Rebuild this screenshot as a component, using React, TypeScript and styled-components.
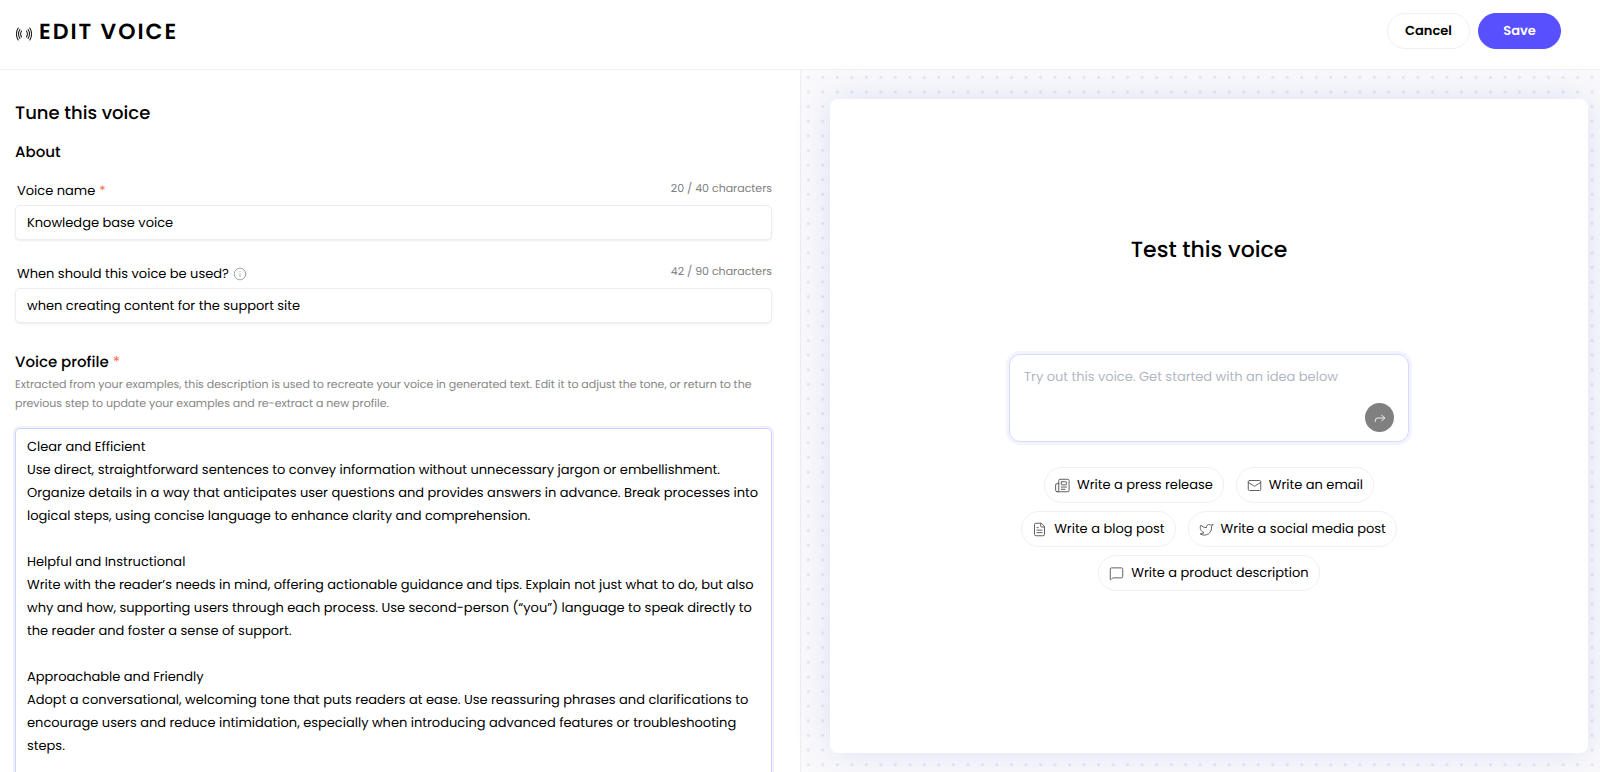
import React, { useState } from "react";
import styled, { createGlobalStyle, css } from "styled-components";
import { FileText, Forward, Info, Mail, MessageSquare, Twitter } from "lucide-react";

const GlobalStyle = createGlobalStyle`
  *, *::before, *::after { box-sizing: border-box; }
  body {
    margin: 0;
    background: #fff;
    color: #000;
    font-family: Poppins, Inter, "Open Sans", sans-serif;
    font-size: 14px;
    line-height: 20px;
    text-rendering: geometricPrecision;
  }
  button, input, textarea { font: inherit; color: inherit; text-rendering: inherit; }
  h1, h2, h3, p { margin: 0; }
`;

const Page = styled.div`
  display: flex;
  flex-direction: column;
  height: 100vh;
  overflow: hidden;
`;

const Header = styled.header`
  display: flex;
  flex: none;
  align-items: flex-start;
  justify-content: space-between;
  height: 70px;
  padding: 13px 39px 0 16px;
  border-bottom: 1px solid #f1f1f3;
`;

const Brand = styled.div`
  display: flex;
  align-items: center;
  gap: 7px;
  height: 38px;
`;

const PageTitle = styled.h1`
  font-size: 22px;
  line-height: 36px;
  font-weight: 600;
  letter-spacing: 2px;
  text-transform: uppercase;
`;

const Actions = styled.div`
  display: flex;
  gap: 8px;
`;

const ActionButton = styled.button<{ $primary?: boolean }>`
  width: 83px;
  height: 36px;
  padding: 0;
  border: 1px solid #f0f0f2;
  border-radius: 18px;
  background: #fff;
  font-size: 13px;
  font-weight: 600;
  ${(p) =>
    p.$primary &&
    css`
      border-color: #5850ff;
      background: #5850ff;
      color: #fff;
    `}
`;

const Columns = styled.main`
  display: grid;
  flex: 1;
  grid-template-columns: 1fr 1fr;
  min-height: 0;
`;

const TunePanel = styled.section`
  min-width: 0;
  padding: 29px 28px 0 15px;
  overflow: hidden;
`;

const PanelTitle = styled.h2`
  font-size: 18px;
  line-height: 30px;
  font-weight: 500;
`;

const SectionTitle = styled.h3`
  font-size: 15px;
  line-height: 24px;
  font-weight: 500;
`;

const AboutTitle = styled(SectionTitle)`
  margin: 12px 0;
`;

const Required = styled.span`
  color: #ff6a4d;
  font-weight: 400;
`;

const Field = styled.div`
  margin-bottom: 20px;
`;

const FieldHead = styled.div`
  display: flex;
  align-items: center;
  justify-content: space-between;
  height: 28px;
  padding-left: 2px;
`;

const FieldLabel = styled.label`
  display: flex;
  align-items: center;
  gap: 4px;
  font-size: 13px;
`;

const Counter = styled.span`
  padding-bottom: 6px;
  color: #808080;
  font-size: 11px;
`;

const TextInput = styled.input`
  display: block;
  width: 100%;
  height: 35px;
  padding: 0 11px;
  border: 1px solid #ededf1;
  border-radius: 5px;
  background: #fff;
  box-shadow: 0 1px 2px rgba(0, 0, 0, 0.08);
  font-size: 13px;
  outline: none;
`;

const ProfileLabel = styled.label`
  display: flex;
  gap: 4px;
  padding-top: 8px;
  font-size: 15px;
  line-height: 24px;
  font-weight: 500;
`;

const Hint = styled.p`
  color: #858585;
  font-size: 11px;
  line-height: 19px;
`;

const ProfileText = styled.textarea`
  display: block;
  width: 100%;
  height: 480px;
  margin-top: 15px;
  padding: 6px 11px;
  border: 1px solid #ccd2ff;
  border-radius: 5px;
  background: #fff;
  box-shadow: 0 0 0 2px #f0f1ff;
  font-size: 13px;
  line-height: 23px;
  resize: none;
  outline: none;
  overflow: hidden;
`;

const TestPanel = styled.section`
  display: flex;
  min-width: 0;
  padding: 29px 12px 19px 29px;
  border-left: 1px solid #ededf2;
  background-color: #fafafc;
  background-image: radial-gradient(circle, #e6e6ec 1px, transparent 2px);
  background-size: calc(100% / 55) calc(100% / 48);
`;

const Card = styled.div`
  display: flex;
  flex: 1;
  flex-direction: column;
  align-items: center;
  padding-top: 135px;
  border-radius: 8px;
  background: #fff;
  box-shadow: 0 0 36px rgba(88, 96, 210, 0.18);
`;

const TestTitle = styled.h2`
  font-size: 22px;
  line-height: 32px;
  font-weight: 500;
`;

const PromptBox = styled.form`
  display: flex;
  align-items: flex-end;
  width: 400px;
  height: 88px;
  margin: 88px 0 25px;
  padding: 9px 14px;
  border: 1px solid #d5daff;
  border-radius: 11px;
  background: #fff;
  box-shadow: 0 0 0 3px #f3f4ff;
`;

const PromptInput = styled.textarea`
  flex: 1;
  height: 100%;
  padding: 3px 0;
  border: 0;
  background: none;
  font-size: 13px;
  resize: none;
  outline: none;
  &::placeholder { color: #b1b7c2; opacity: 1; }
`;

const SendButton = styled.button`
  display: flex;
  align-items: center;
  justify-content: center;
  width: 29px;
  height: 29px;
  padding: 0;
  border: 0;
  border-radius: 50%;
  background: #808080;
  color: #fff;
`;

const Ideas = styled.div`
  display: flex;
  flex-wrap: wrap;
  justify-content: center;
  gap: 8px 12px;
  width: 400px;
`;

const IdeaButton = styled.button`
  display: flex;
  align-items: center;
  gap: 7px;
  height: 36px;
  padding: 0 10px;
  border: 1px solid #f0f0f4;
  border-radius: 18px;
  background: #fff;
  font-size: 13px;
  white-space: nowrap;
  svg { color: #555; }
`;

const VoiceIcon = () => (
  <svg width="16" height="18" viewBox="0 -4 16 18" fill="none" stroke="#222" strokeWidth="1.1" strokeLinecap="round" aria-hidden="true">
    <path d="M2.200 1C.100 4.500.100 9.500 2.200 13M3.900 2.500C2.200 5.200 2.200 8.800 3.900 11.500M5.500 4C4.300 6 4.300 8 5.500 10" />
    <path d="M13.800 1C15.900 4.500 15.900 9.500 13.800 13M12.100 2.500C13.800 5.200 13.800 8.800 12.100 11.500M10.500 4C11.700 6 11.700 8 10.500 10" />
  </svg>
);

const PressIcon = ({ size, strokeWidth }: { size: number; strokeWidth: number }) => (
  <svg width={size} height={size} viewBox="0 0 24 24" fill="none" stroke="currentColor" strokeWidth={strokeWidth} strokeLinecap="round" strokeLinejoin="round" aria-hidden="true">
    <path d="M3.500 22h17a2 2 0 0 0 2-2V4a2 2 0 0 0-2-2H8a2 2 0 0 0-2 2v15.500a2.500 2.500 0 0 1-5 0V11a2 2 0 0 1 2-2h3" />
    <rect x="10" y="6" width="8.500" height="5" rx="1" />
    <path d="M10 14.500h8.500M10 18h6" />
  </svg>
);

const profile = `Clear and Efficient
Use direct, straightforward sentences to convey information without unnecessary jargon or embellishment. Organize details in a way that anticipates user questions and provides answers in advance. Break processes into logical steps, using concise language to enhance clarity and comprehension.

Helpful and Instructional
Write with the reader’s needs in mind, offering actionable guidance and tips. Explain not just what to do, but also why and how, supporting users through each process. Use second-person (“you”) language to speak directly to the reader and foster a sense of support.

Approachable and Friendly
Adopt a conversational, welcoming tone that puts readers at ease. Use reassuring phrases and clarifications to encourage users and reduce intimidation, especially when introducing advanced features or troubleshooting steps.`;

const ideas = [
  { icon: PressIcon, label: "Write a press release" },
  { icon: Mail, label: "Write an email" },
  { icon: FileText, label: "Write a blog post" },
  { icon: Twitter, label: "Write a social media post" },
  { icon: MessageSquare, label: "Write a product description" },
];

export default function App() {
  const [name, setName] = useState("Knowledge base voice");
  const [usage, setUsage] = useState("when creating content for the support site");

  return (
    <Page>
      <GlobalStyle />
      <Header>
        <Brand>
          <VoiceIcon />
          <PageTitle>Edit voice</PageTitle>
        </Brand>
        <Actions>
          <ActionButton type="button">Cancel</ActionButton>
          <ActionButton type="button" $primary>Save</ActionButton>
        </Actions>
      </Header>
      <Columns>
        <TunePanel>
          <PanelTitle>Tune this voice</PanelTitle>
          <AboutTitle>About</AboutTitle>
          <Field>
            <FieldHead>
              <FieldLabel htmlFor="voice-name">Voice name <Required>*</Required></FieldLabel>
              <Counter>{name.length} / 40 characters</Counter>
            </FieldHead>
            <TextInput id="voice-name" maxLength={40} value={name} onChange={(e) => setName(e.target.value)} />
          </Field>
          <Field>
            <FieldHead>
              <FieldLabel htmlFor="voice-usage">
                When should this voice be used?
                <Info size={14} strokeWidth={1.5} color="#999" />
              </FieldLabel>
              <Counter>{usage.length} / 90 characters</Counter>
            </FieldHead>
            <TextInput id="voice-usage" maxLength={90} value={usage} onChange={(e) => setUsage(e.target.value)} />
          </Field>
          <ProfileLabel htmlFor="voice-profile">Voice profile <Required>*</Required></ProfileLabel>
          <Hint>
            Extracted from your examples, this description is used to recreate your voice in generated text. Edit it to adjust the tone, or return to the previous step to update your examples and re-extract a new profile.
          </Hint>
          <ProfileText id="voice-profile" defaultValue={profile} spellCheck={false} />
        </TunePanel>
        <TestPanel>
          <Card>
            <TestTitle>Test this voice</TestTitle>
            <PromptBox onSubmit={(e) => e.preventDefault()}>
              <PromptInput aria-label="Test prompt" placeholder="Try out this voice. Get started with an idea below" />
              <SendButton type="submit" aria-label="Send">
                <Forward size={14} strokeWidth={1.5} />
              </SendButton>
            </PromptBox>
            <Ideas>
              {ideas.map(({ icon: Icon, label }) => (
                <IdeaButton type="button" key={label}>
                  <Icon size={15} strokeWidth={1.5} />
                  {label}
                </IdeaButton>
              ))}
            </Ideas>
          </Card>
        </TestPanel>
      </Columns>
    </Page>
  );
}
